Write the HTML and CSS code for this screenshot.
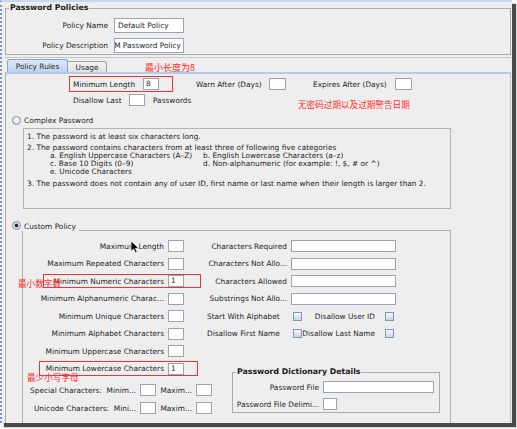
FILE: index.html
```html
<!DOCTYPE html>
<html lang="en">
<head>
<meta charset="utf-8">
<title>Password Policies</title>
<link rel="stylesheet" href="styles.css">
</head>
<body>
<div class="window">
  <fieldset class="group policies">
    <legend>Password Policies</legend>
    <div class="pol-grid">
      <span class="pl">Policy Name</span><span class="box pf">Default Policy</span>
      <span class="pl">Policy Description</span><span class="box pf scrolled"><span>OIM Password Policy</span></span>
    </div>
  </fieldset>

  <div class="tabs">
    <div class="tab active">Policy Rules</div>
    <div class="tab plain">Usage</div>
  </div>

  <div class="panel">
    <div class="row r1">
      <span class="l l-min">Minimum Length</span><span class="box sm">8</span>
      <span class="l l-warn">Warn After (Days)</span><span class="box sm2"></span>
      <span class="l l-exp">Expires After (Days)</span><span class="box sm2"></span>
    </div>
    <div class="row r2">
      <span class="l l-dis">Disallow Last</span><span class="box sm"></span><span class="l l-pw">Passwords</span>
    </div>

    <div class="radio-row complex-head"><span class="radio"></span><span>Complex Password</span></div>
    <div class="complex">
      <p class="c1">1. The password is at least six characters long.</p>
      <p class="c2">2. The password contains characters from at least three of following five categories</p>
      <div class="cats">
        <span>a. English Uppercase Characters (A–Z)</span><span>b. English Lowercase Characters (a–z)</span>
        <span>c. Base 10 Digits (0–9)</span><span>d. Non-alphanumeric (for example: !, $, # or ^)</span>
        <span>e. Unicode Characters</span>
      </div>
      <p class="c3">3. The password does not contain any of user ID, first name or last name when their length is larger than 2.</p>
    </div>

    <div class="radio-row custom-head"><span class="radio on"></span><span>Custom Policy</span><span class="rule-line"></span></div>
    <div class="custom">
      <div class="cols">
        <div class="lcol">
          <div class="lgrid">
            <span class="cl">Maximum Length</span><span class="box sm"></span>
            <span class="cl">Maximum Repeated Characters</span><span class="box sm"></span>
            <span class="cl">Minimum Numeric Characters</span><span class="box sm">1</span>
            <span class="cl">Minimum Alphanumeric Charac...</span><span class="box sm"></span>
            <span class="cl">Minimum Unique Characters</span><span class="box sm"></span>
            <span class="cl">Minimum Alphabet Characters</span><span class="box sm"></span>
            <span class="cl">Minimum Uppercase Characters</span><span class="box sm"></span>
            <span class="cl">Minimum Lowercase Characters</span><span class="box sm">1</span>
          </div>
          <div class="spec s1">
            <span class="sl">Special Characters:&nbsp; Minim...</span><span class="box sm"></span>
            <span class="ml">Maxim...</span><span class="box sm"></span>
          </div>
          <div class="spec s2">
            <span class="sl">Unicode Characters:&nbsp; Mini...</span><span class="box sm"></span>
            <span class="ml">Maxim...</span><span class="box sm"></span>
          </div>
        </div>
        <div class="rcol">
          <div class="rgrid">
            <span class="rl">Characters Required</span><span class="box wf"></span>
            <span class="rl">Characters Not Allo...</span><span class="box wf"></span>
            <span class="rl">Characters Allowed</span><span class="box wf"></span>
            <span class="rl">Substrings Not Allo...</span><span class="box wf"></span>
            <div class="cbrow">
              <span class="cb1l">Start With Alphabet</span><span class="cb"></span>
              <span class="cb2l"><span>Disallow User ID</span></span><span class="cb"></span>
            </div>
            <div class="cbrow">
              <span class="cb1l">Disallow First Name</span><span class="cb"></span>
              <span class="cb2l"><span>Disallow Last Name</span></span><span class="cb"></span>
            </div>
          </div>
          <fieldset class="group dict">
            <legend>Password Dictionary Details</legend>
            <div class="dgrid">
              <span class="dl">Password File</span><span class="box df"></span>
              <span class="dl">Password File Delimi...</span><span class="box dd"></span>
            </div>
          </fieldset>
        </div>
      </div>
    </div>
  </div>

  <!-- annotations drawn over the screenshot -->
  <div class="mark m1"></div>
  <div class="note n1">最小长度为8</div>
  <div class="note n2">无密码过期以及过期警告日期</div>
  <div class="mark m2"></div>
  <div class="note n3">最小数字数</div>
  <div class="mark m3"></div>
  <div class="note n4">最少小写字母</div>
  <svg class="cursor" width="10" height="14" viewBox="0 0 10 14"><path d="M1 0.8 L1 11.5 L3.6 9.1 L5.5 13 L7.3 12.2 L5.4 8.4 L8.8 8.4 Z" fill="#000" stroke="#fff" stroke-width="0.8"/></svg>
</div>
</body>
</html>
```

FILE: styles.css
```css
* { box-sizing: border-box; }
html, body { margin: 0; padding: 0; }
body {
  width: 517px;
  height: 429px;
  overflow: hidden;
  background: #f7f7f7;
  font-family: "DejaVu Sans", sans-serif;
  font-size: 7.4px;
  color: #1e1e1e;
}
p { margin: 0; }

.window {
  position: relative;
  width: 512px;
  height: 423px;
  background: #eeeeee;
  border-left: 2px dotted #8194bd;
  border-top: 2px solid #c9d8ec;
  box-shadow: 4px 4px 1px #4a4a4a;
  overflow: hidden;
}

/* group boxes */
fieldset.group {
  margin: 0;
  padding: 0;
  border: 1px solid #acacac;
  min-width: 0;
}
fieldset.group legend {
  font-weight: bold;
  font-size: 7.8px;
  line-height: 10px;
  padding: 0 1px;
  color: #1a1a1a;
}
.policies {
  margin: 1px 1px 0 3px !important;
  padding: 5px 0 1px 6px !important;
}
.policies legend { margin-left: -3px; }

.pol-grid {
  display: grid;
  grid-template-columns: 96px 70px;
  grid-auto-rows: 15px;
  column-gap: 6px;
  row-gap: 5px;
  align-items: center;
}
.pl { text-align: right; white-space: nowrap; }

/* fields */
.box {
  display: flex;
  align-items: center;
  background: #fff;
  border: 1px solid #9aa4b3;
  height: 12px;
  padding-left: 2px;
  white-space: nowrap;
  overflow: hidden;
  flex: none;
  line-height: 10px;
}
.pf { height: 15px; width: 70px; padding-left: 3px; }
.scrolled { justify-content: flex-end; padding-right: 2px; }
.sm { width: 16px; }
.sm2 { width: 17px; }
.wf { width: 105px; }
.df { width: 111px; }
.dd { width: 14px; }

/* tabs */
.tabs {
  display: flex;
  align-items: flex-end;
  margin: 2px 1px 0 3px;
  border-top: 1px solid #c8c8c8;
  padding: 1px 0 0 2px;
  height: 15px;
}
.tab {
  display: flex;
  align-items: center;
  justify-content: center;
  color: #2a2a2a;
  border-bottom: none;
}
.tab.active {
  width: 61px;
  height: 13px;
  background: linear-gradient(#dce8f7, #bdd2ee);
  border: 1px solid #8ea3c1;
  border-bottom: none;
  border-radius: 3px 3px 0 0;
}
.tab.plain {
  width: 39px;
  height: 11px;
  background: linear-gradient(#f3f3f3, #e1e1e1);
  border: 1px solid #a2a2a2;
  border-bottom: none;
  border-left: none;
  border-radius: 0 3px 0 0;
}

.panel {
  margin: 0 1px 0 3px;
  height: 360px;
  border-top: 2px solid #b6cbe6;
  border-left: 1px solid #ababab;
  border-right: 1px solid #c4c4c4;
}

.row {
  display: flex;
  align-items: center;
  height: 12px;
  padding-left: 67px;
  white-space: nowrap;
}
.r1 { margin-top: 4px; }
.r2 { margin-top: 4px; }
.l-min { width: 70px; }
.l-warn { width: 73px; margin-left: 37px; }
.l-exp { width: 82px; margin-left: 27px; }
.l-dis { width: 56px; }
.l-pw { margin-left: 8px; }

.radio-row {
  display: flex;
  align-items: center;
  height: 10px;
  padding-left: 6px;
  white-space: nowrap;
}
.radio-row .radio { margin-right: 3px; }
.complex-head { margin-top: 9px; }
.custom-head { margin-top: 12px; width: 445px; align-items: stretch; }
.custom-head span { display: flex; align-items: center; }
.custom-head .rule-line {
  flex: 1;
  margin-left: 3px;
  border-bottom: 1px solid #b0b0b0;
}

.radio {
  width: 9px;
  height: 9px;
  border-radius: 50%;
  border: 1px solid #7f8fa8;
  background: radial-gradient(circle at 50% 35%, #ffffff, #c8d5e6);
  flex: none;
}
.radio.on {
  background: radial-gradient(circle, #2b2b2b 0 1.6px, #dfe6ef 2.2px, #bfcbdc 100%);
}
.cb {
  width: 9px;
  height: 9px;
  border: 1px solid #8797ae;
  background: linear-gradient(#f5f8fc, #c6d6ec);
  flex: none;
  position: relative;
}

.complex {
  margin: 3px 0 0 17px;
  width: 428px;
  height: 81px;
  border: 1px solid #b4b4b4;
  padding: 3px 0 0 3px;
  white-space: nowrap;
  line-height: 9px;
}
.c2 { margin-top: 1.5px; }
.cats {
  display: grid;
  grid-template-columns: 153px auto;
  grid-auto-rows: 8px;
  line-height: 8px;
  margin-left: 23px;
}
.c3 { margin-top: 3px; }

.custom {
  margin-left: 16px;
  width: 429px;
  height: 220px;
  border-left: 1px solid #b0b0b0;
  border-right: 1px solid #b0b0b0;
  padding-top: 9px;
}
.cols { display: flex; align-items: flex-start; }
.lcol { width: 161px; flex: none; }
.lgrid {
  display: grid;
  grid-template-columns: 141px 16px;
  grid-auto-rows: 12px;
  column-gap: 4px;
  row-gap: 5.5px;
  align-items: center;
}
.cl { text-align: right; white-space: nowrap; overflow: hidden; }

.spec {
  display: flex;
  align-items: center;
  height: 12px;
  width: 200px;
  white-space: nowrap;
}
.s1 { margin-top: 9.5px; }
.s2 { margin-top: 6px; }
.sl { width: 113px; text-align: right; }
.spec .box { margin-left: 4px; }
.ml { width: 36px; text-align: right; }

.rcol { margin-left: 23px; flex: none; }
.rgrid {
  display: grid;
  grid-template-columns: 80px 105px;
  grid-auto-rows: 12px;
  column-gap: 4px;
  row-gap: 5.5px;
  align-items: center;
}
.rl { text-align: right; white-space: nowrap; overflow: hidden; }
.cbrow {
  grid-column: 1 / -1;
  display: flex;
  align-items: center;
  white-space: nowrap;
}
.cb1l { width: 86px; }
.cb2l {
  width: 83px;
  display: flex;
  justify-content: flex-end;
  overflow: hidden;
  padding-right: 10px;
}

.dict {
  margin: 27.5px 0 0 25px !important;
  width: 208px;
  padding: 4px 5px 2px 2px !important;
}
.dict legend { margin-left: 1px; }
.dgrid {
  display: grid;
  grid-template-columns: 84px 111px;
  grid-auto-rows: 12px;
  column-gap: 4px;
  row-gap: 5px;
  align-items: center;
}
.dl { text-align: right; white-space: nowrap; }

/* annotations */
.mark {
  position: absolute;
  border: 1px solid #ee3535;
}
.m1 { left: 67px; top: 74px; width: 104px; height: 16px; }
.m2 { left: 41px; top: 272px; width: 158px; height: 14px; }
.m3 { left: 37px; top: 359px; width: 159px; height: 15px; }
.note {
  position: absolute;
  color: #ff2b2b;
  font-family: "Noto Sans CJK SC", "DejaVu Sans", sans-serif;
  font-size: 8.6px;
  line-height: 11px;
  white-space: nowrap;
}
.n1 { left: 143px; top: 60px; font-size: 9px; }
.n2 { left: 296px; top: 97px; }
.n3 { left: 16px; top: 276px; }
.n4 { left: 25px; top: 370px; }
.cursor { position: absolute; left: 128px; top: 238px; }
```
